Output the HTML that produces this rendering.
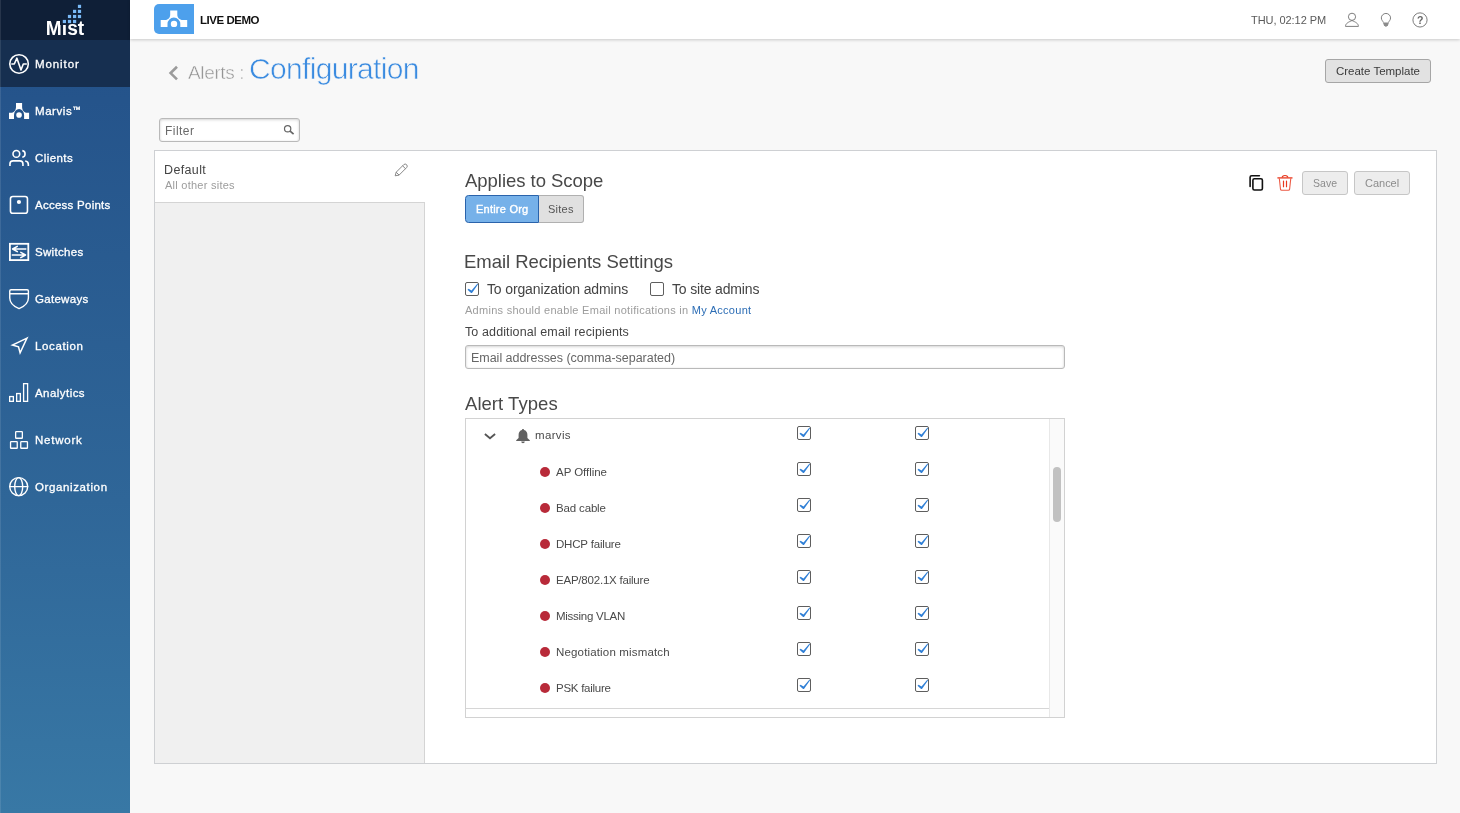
<!DOCTYPE html>
<html lang="en">
<head>
<meta charset="utf-8">
<title>Alerts : Configuration</title>
<style>
*{box-sizing:border-box;margin:0;padding:0}
html,body{width:1460px;height:813px;overflow:hidden;background:#f8f8f8;font-family:"Liberation Sans",sans-serif;color:#4a4a4a}
.abs{position:absolute}
#side{position:absolute;left:0;top:0;width:130px;height:813px;background:linear-gradient(180deg,#22508a 0,#25548b 100px,#2f6698 500px,#3878a5 813px)}
#side .logo{position:absolute;left:0;top:0;width:130px;height:40px;background:#0f1f37}
#side .sel{position:absolute;left:0;top:40px;width:130px;height:47px;background:#162f50}
#top{position:absolute;left:130px;top:0;width:1330px;height:39px;background:#fff;box-shadow:0 1px 3px rgba(0,0,0,.19)}
#brand{position:absolute;left:154px;top:4px;width:40px;height:30px;background:#4da0ec;border-radius:5px 0 0 5px}
.t{position:absolute;white-space:nowrap;will-change:transform}
.btn{position:absolute;border:1px solid #a8a8a8;border-radius:3px;background:#e2e2e2}
.cb{position:absolute;width:14px;height:14px;border:1px solid #5e5e5e;border-radius:2px;background:#fff}
.cb svg{position:absolute;left:-1px;top:-1px;width:14px;height:14px}
.dot{position:absolute;width:10px;height:10px;border-radius:50%;background:#b82a39}
svg{position:absolute;overflow:visible}
#icons{z-index:5;pointer-events:none}
.cb svg{z-index:6}
</style>
</head>
<body>
<div id="side">
  <div class="logo"></div>
  <div class="sel"></div>
  <div class="abs" style="left:0;top:0;width:1px;height:813px;background:rgba(255,255,255,.1)"></div>
</div>
<div id="top"></div>
<div id="brand"></div>

<!-- all icons drawn in page coordinates -->
<svg id="icons" style="left:0;top:0" width="1460" height="813" viewBox="0 0 1460 813">
  <!-- Mist logo squares -->
  <rect x="60" y="18" width="8" height="7" fill="#0f1f37"/>
  <g fill="#79b9f6">
    <rect x="77.9" y="4.8" width="3.2" height="3.2"/>
    <rect x="73" y="9.8" width="3.2" height="3.2"/><rect x="77.9" y="9.8" width="3.2" height="3.2"/>
    <rect x="67.9" y="14.9" width="3.2" height="3.2"/><rect x="73" y="14.9" width="3.2" height="3.2"/><rect x="77.9" y="14.9" width="3.2" height="3.2"/>
    <rect x="62.8" y="19.9" width="3.2" height="3.2"/><rect x="67.9" y="19.9" width="3.2" height="3.2"/><rect x="73" y="19.9" width="3.2" height="3.2"/>
  </g>
  <!-- sidebar icons -->
  <g fill="none" stroke="#fff" stroke-width="1.6" stroke-linejoin="round" stroke-linecap="round">
    <!-- monitor -->
    <circle cx="19.05" cy="63.95" r="9.25"/>
    <path d="M11.3 64H14.3L16.9 58.2 21 70 23.3 64H26.8" stroke-linecap="butt"/>
    <!-- clients -->
    <circle cx="16.35" cy="153.9" r="3.35"/>
    <path d="M22.3 150.6A3.35 3.35 0 0 1 22.3 157.2" stroke-linecap="butt"/>
    <path d="M9.95 165.9V164A3.1 3.1 0 0 1 13.05 160.9H19.85A3.1 3.1 0 0 1 22.95 164V165.9" stroke-linecap="butt"/>
    <path d="M25.2 160.95A3.5 3.5 0 0 1 28.35 164.4V165.9" stroke-linecap="butt"/>
    <!-- access points -->
    <rect x="10.45" y="196.45" width="17" height="16.8" rx="2.3"/>
    <!-- switches -->
    <rect x="9.9" y="243.8" width="18.4" height="16.3" stroke-width="1.8" stroke-linejoin="miter"/>
    <path d="M25.8 249H13M17.3 246.3L12.6 249 17.3 251.7M12.3 255H25M20.8 252.3L25.5 255 20.8 257.7" stroke-width="1.5"/>
    <!-- gateways -->
    <path d="M9.75 291A1.3 1.3 0 0 1 11.05 289.7H27.1A1.3 1.3 0 0 1 28.4 291V298C28.4 303 24 306.6 19.07 308.6 14.1 306.6 9.75 303 9.75 298ZM9.75 293.7H28.4" stroke-width="1.4"/>
    <!-- location -->
    <path d="M27 338.1L12.4 345 18.5 346.9 20.1 352.8Z" stroke-width="1.5" stroke-linejoin="miter"/>
    <!-- analytics -->
    <g stroke-width="1.3" stroke-linejoin="miter">
      <rect x="9.65" y="396.55" width="3.7" height="4.8"/>
      <rect x="16.65" y="393.55" width="3.7" height="7.8"/>
      <rect x="23.6" y="383.65" width="4" height="17.7"/>
    </g>
    <!-- network -->
    <g stroke-width="1.3">
      <rect x="15.65" y="431.55" width="6.7" height="6.7" rx=".6"/>
      <rect x="10.55" y="441.55" width="6.7" height="6.7" rx=".6"/>
      <rect x="20.75" y="441.55" width="6.7" height="6.7" rx=".6"/>
    </g>
    <!-- organization -->
    <g stroke-width="1.4">
      <circle cx="18.7" cy="486.6" r="9"/>
      <ellipse cx="18.7" cy="486.6" rx="4" ry="9"/>
      <path d="M9.7 486.6H27.7"/>
    </g>
  </g>
  <g fill="#fff">
    <!-- marvis -->
    <path d="M16 103H22.1V107C22.1 110 24 112.8 27 112.8H29.1V118.9H24.1V115A5.05 5.9 0 0 0 14 115V118.9H9V112.8H11.1C14.1 112.8 16 110 16 107Z"/>
    <circle cx="19.05" cy="115.05" r="2.8"/>
    <!-- AP dot -->
    <circle cx="18.95" cy="202" r="2.1"/>
    <!-- brand marvis -->
    <path d="M170.2 10.6H177.3V14.4C177.3 17.6 179.6 19.9 182.8 19.9H187.2V27.1H180.3V24A6.4 6.4 0 0 0 167.5 24V27.1H160.7V19.9H165.1C168.2 19.9 170.2 17.6 170.2 14.4Z"/>
    <circle cx="174" cy="23.9" r="3.2"/>
  </g>
  <!-- top right icons -->
  <g fill="none" stroke="#777" stroke-width=".95">
    <circle cx="1352" cy="16.8" r="3.6"/>
    <path d="M1345.5 26.4H1358.4C1358.4 23.2 1355.2 22 1352 20.5 1348.8 22 1345.5 23.2 1345.5 26.4Z" stroke-linejoin="round"/>
    <path d="M1383.3 22.4C1383 21 1381.35 20.3 1381.35 17.9A4.6 4.45 0 0 1 1390.55 17.9C1390.55 20.3 1388.9 21 1388.6 22.4"/>
    <circle cx="1420" cy="19.95" r="7.1"/>
  </g>
  <path d="M1382.9 22.4H1389L1388 25.3 1385.95 27.1 1383.9 25.3Z" fill="#8c8c8c"/>
  <!-- back chevron -->
  <path d="M177 66.8L170.6 73.1 177 79.4" fill="none" stroke="#9b9b9b" stroke-width="2.6"/>
  <!-- search -->
  <circle cx="287.65" cy="128.75" r="3.15" fill="none" stroke="#666" stroke-width="1.2"/>
  <path d="M290.1 131.1L293.6 134.2" stroke="#666" stroke-width="1.7" fill="none"/>
  <!-- pencil -->
  <g fill="none" stroke="#7a7a7a" stroke-width=".9" stroke-linejoin="round">
    <path d="M395.2 175.8L396.2 172.2 403.7 164.7A2.05 2.05 0 0 1 406.6 167.6L399.1 175.1Z"/>
    <path d="M396.2 172.2L399.1 175.1M402.6 165.8L405.5 168.7"/>
  </g>
  <!-- copy -->
  <g fill="none" stroke="#111" stroke-width="1.6">
    <path d="M1250.1 186.4V177.3A1.6 1.6 0 0 1 1251.7 175.7H1259.4" stroke-linecap="round"/>
    <rect x="1252.9" y="178.7" width="9.5" height="11.3" rx="1.5"/>
  </g>
  <!-- trash -->
  <g fill="none" stroke="#e8391f">
    <path d="M1277.4 177.9H1292.5" stroke-width="1.3"/>
    <path d="M1282.2 177.6C1282.2 176.1 1283.3 175.5 1285 175.5 1286.7 175.5 1287.8 176.1 1287.8 177.6" stroke-width="1.2"/>
    <path d="M1279.3 178.2L1280.5 189.2C1280.6 189.9 1281 190.3 1281.7 190.3H1288.4C1289.1 190.3 1289.5 189.9 1289.6 189.2L1290.8 178.2" stroke-width="1.1" stroke="#ec5a45"/>
    <path d="M1283.5 181.2V186.7M1286.5 181.2V186.7" stroke-width="1.2" stroke-linecap="round"/>
  </g>
  <!-- tree chevron + bell -->
  <path d="M484.9 434L490 438.3 495.1 434" fill="none" stroke="#555" stroke-width="1.8"/>
  <path d="M523 429.1C523.6 429.1 524 429.5 524 430.1 526.1 430.6 527.4 432.4 527.4 434.7V438.1L529.8 440.2V440.9H516.2V440.2L518.6 438.1V434.7C518.6 432.4 519.9 430.6 522 430.1 522 429.5 522.4 429.1 523 429.1ZM521.2 441.5H524.8A1.8 1.8 0 0 1 521.2 441.5Z" fill="#616161"/>
</svg>

<!-- boxes -->
<div class="btn" style="left:1325px;top:59px;width:106px;height:24px;border-color:#a6a6a6;background:#e2e2e2"></div>
<div class="abs" id="filter" style="left:159px;top:118px;width:141px;height:24px;border:1px solid #b9b9b9;border-radius:3px;background:#fff;box-shadow:inset 0 1px 3px rgba(0,0,0,.16),inset 0 0 2px rgba(0,0,0,.05)"></div>
<div class="abs" id="panel" style="left:154px;top:150px;width:1283px;height:614px;border:1px solid #ced0d3;background:#fff"></div>
<div class="abs" id="leftgrey" style="left:155px;top:202px;width:270px;height:561px;background:#f0f0f0;border-top:1px solid #d4d4d4;border-right:1px solid #d4d4d4"></div>
<div class="abs" id="bEntire" style="left:465px;top:195px;width:74px;height:28px;border:1px solid #2a63ab;border-radius:3.5px 0 0 3.5px;background:#76b1e9"></div>
<div class="abs" id="bSites" style="left:539px;top:195px;width:45px;height:28px;border:1px solid #b0b0b0;border-left:none;border-radius:0 3px 3px 0;background:#e0e0e0"></div>
<div class="btn" style="left:1302px;top:171px;width:46px;height:24px;border-color:#c6c6c6;background:#ededed"></div>
<div class="btn" style="left:1354px;top:171px;width:56px;height:24px;border-color:#c6c6c6;background:#ededed"></div>
<div class="abs" id="emailin" style="left:465px;top:345px;width:600px;height:24px;border:1px solid #b9b9b9;border-radius:3px;background:#fff;box-shadow:inset 0 1px 3px rgba(0,0,0,.16),inset 0 0 2px rgba(0,0,0,.05)"></div>
<div class="abs" id="box" style="left:465px;top:418px;width:600px;height:300px;border:1px solid #d2d2d2;background:#fff"></div>
<div class="abs" id="track" style="left:1049px;top:419px;width:15px;height:298px;background:#fafafa;border-left:1px solid #e8e8e8"></div>
<div class="abs" id="thumb" style="left:1053px;top:467px;width:8px;height:55px;border-radius:4px;background:#c1c1c1"></div>
<div class="abs" id="sep" style="left:466px;top:708px;width:583px;height:1px;background:#d6d6d6"></div>
<div class="cb" style="left:465px;top:282px"><svg viewBox="0 0 14 14"><path d="M2.5 7.8L3.6 6.7 6.5 8.6 12.3 1.8 13.1 2.3 7 10.9 6.1 10.9Z" fill="#2f7fd6"/></svg></div>
<div class="cb" style="left:650px;top:282px"></div>
<div class="cb" style="left:797px;top:426px"><svg viewBox="0 0 14 14"><path d="M2.5 7.8L3.6 6.7 6.5 8.6 12.3 1.8 13.1 2.3 7 10.9 6.1 10.9Z" fill="#2f7fd6"/></svg></div>
<div class="cb" style="left:915px;top:426px"><svg viewBox="0 0 14 14"><path d="M2.5 7.8L3.6 6.7 6.5 8.6 12.3 1.8 13.1 2.3 7 10.9 6.1 10.9Z" fill="#2f7fd6"/></svg></div>
<div class="cb" style="left:797px;top:462px"><svg viewBox="0 0 14 14"><path d="M2.5 7.8L3.6 6.7 6.5 8.6 12.3 1.8 13.1 2.3 7 10.9 6.1 10.9Z" fill="#2f7fd6"/></svg></div>
<div class="cb" style="left:915px;top:462px"><svg viewBox="0 0 14 14"><path d="M2.5 7.8L3.6 6.7 6.5 8.6 12.3 1.8 13.1 2.3 7 10.9 6.1 10.9Z" fill="#2f7fd6"/></svg></div>
<div class="cb" style="left:797px;top:498px"><svg viewBox="0 0 14 14"><path d="M2.5 7.8L3.6 6.7 6.5 8.6 12.3 1.8 13.1 2.3 7 10.9 6.1 10.9Z" fill="#2f7fd6"/></svg></div>
<div class="cb" style="left:915px;top:498px"><svg viewBox="0 0 14 14"><path d="M2.5 7.8L3.6 6.7 6.5 8.6 12.3 1.8 13.1 2.3 7 10.9 6.1 10.9Z" fill="#2f7fd6"/></svg></div>
<div class="cb" style="left:797px;top:534px"><svg viewBox="0 0 14 14"><path d="M2.5 7.8L3.6 6.7 6.5 8.6 12.3 1.8 13.1 2.3 7 10.9 6.1 10.9Z" fill="#2f7fd6"/></svg></div>
<div class="cb" style="left:915px;top:534px"><svg viewBox="0 0 14 14"><path d="M2.5 7.8L3.6 6.7 6.5 8.6 12.3 1.8 13.1 2.3 7 10.9 6.1 10.9Z" fill="#2f7fd6"/></svg></div>
<div class="cb" style="left:797px;top:570px"><svg viewBox="0 0 14 14"><path d="M2.5 7.8L3.6 6.7 6.5 8.6 12.3 1.8 13.1 2.3 7 10.9 6.1 10.9Z" fill="#2f7fd6"/></svg></div>
<div class="cb" style="left:915px;top:570px"><svg viewBox="0 0 14 14"><path d="M2.5 7.8L3.6 6.7 6.5 8.6 12.3 1.8 13.1 2.3 7 10.9 6.1 10.9Z" fill="#2f7fd6"/></svg></div>
<div class="cb" style="left:797px;top:606px"><svg viewBox="0 0 14 14"><path d="M2.5 7.8L3.6 6.7 6.5 8.6 12.3 1.8 13.1 2.3 7 10.9 6.1 10.9Z" fill="#2f7fd6"/></svg></div>
<div class="cb" style="left:915px;top:606px"><svg viewBox="0 0 14 14"><path d="M2.5 7.8L3.6 6.7 6.5 8.6 12.3 1.8 13.1 2.3 7 10.9 6.1 10.9Z" fill="#2f7fd6"/></svg></div>
<div class="cb" style="left:797px;top:642px"><svg viewBox="0 0 14 14"><path d="M2.5 7.8L3.6 6.7 6.5 8.6 12.3 1.8 13.1 2.3 7 10.9 6.1 10.9Z" fill="#2f7fd6"/></svg></div>
<div class="cb" style="left:915px;top:642px"><svg viewBox="0 0 14 14"><path d="M2.5 7.8L3.6 6.7 6.5 8.6 12.3 1.8 13.1 2.3 7 10.9 6.1 10.9Z" fill="#2f7fd6"/></svg></div>
<div class="cb" style="left:797px;top:678px"><svg viewBox="0 0 14 14"><path d="M2.5 7.8L3.6 6.7 6.5 8.6 12.3 1.8 13.1 2.3 7 10.9 6.1 10.9Z" fill="#2f7fd6"/></svg></div>
<div class="cb" style="left:915px;top:678px"><svg viewBox="0 0 14 14"><path d="M2.5 7.8L3.6 6.7 6.5 8.6 12.3 1.8 13.1 2.3 7 10.9 6.1 10.9Z" fill="#2f7fd6"/></svg></div>
<div class="dot" style="left:540px;top:467px"></div>
<div class="dot" style="left:540px;top:503px"></div>
<div class="dot" style="left:540px;top:539px"></div>
<div class="dot" style="left:540px;top:575px"></div>
<div class="dot" style="left:540px;top:611px"></div>
<div class="dot" style="left:540px;top:647px"></div>
<div class="dot" style="left:540px;top:683px"></div>
<div class="t" id="nav0" style="left:35.00px;top:57.32px;font-size:11.5px;line-height:15px;color:#fff;font-weight:400;letter-spacing:0.906px;-webkit-text-stroke:.3px #fff;">Monitor</div>
<div class="t" id="nav1" style="left:35.00px;top:104.32px;font-size:11.5px;line-height:15px;color:#fff;font-weight:400;letter-spacing:0.559px;-webkit-text-stroke:.3px #fff;">Marvis<span style="font-size:8px;position:relative;top:-3px;letter-spacing:0">™</span></div>
<div class="t" id="nav2" style="left:35.00px;top:151.32px;font-size:11.5px;line-height:15px;color:#fff;font-weight:400;letter-spacing:0.431px;-webkit-text-stroke:.3px #fff;">Clients</div>
<div class="t" id="nav3" style="left:35.00px;top:198.32px;font-size:11.5px;line-height:15px;color:#fff;font-weight:400;letter-spacing:0.256px;-webkit-text-stroke:.3px #fff;">Access Points</div>
<div class="t" id="nav4" style="left:35.00px;top:245.32px;font-size:11.5px;line-height:15px;color:#fff;font-weight:400;letter-spacing:0.323px;-webkit-text-stroke:.3px #fff;">Switches</div>
<div class="t" id="nav5" style="left:35.00px;top:292.32px;font-size:11.5px;line-height:15px;color:#fff;font-weight:400;letter-spacing:0.292px;-webkit-text-stroke:.3px #fff;">Gateways</div>
<div class="t" id="nav6" style="left:35.00px;top:339.32px;font-size:11.5px;line-height:15px;color:#fff;font-weight:400;letter-spacing:0.641px;-webkit-text-stroke:.3px #fff;">Location</div>
<div class="t" id="nav7" style="left:35.00px;top:386.32px;font-size:11.5px;line-height:15px;color:#fff;font-weight:400;letter-spacing:0.449px;-webkit-text-stroke:.3px #fff;">Analytics</div>
<div class="t" id="nav8" style="left:35.00px;top:433.32px;font-size:11.5px;line-height:15px;color:#fff;font-weight:400;letter-spacing:0.758px;-webkit-text-stroke:.3px #fff;">Network</div>
<div class="t" id="nav9" style="left:35.00px;top:480.32px;font-size:11.5px;line-height:15px;color:#fff;font-weight:400;letter-spacing:0.620px;-webkit-text-stroke:.3px #fff;">Organization</div>
<div class="t" id="livedemo" style="left:200.00px;top:12.52px;font-size:11.5px;line-height:15px;color:#111;font-weight:700;letter-spacing:-0.467px;">LIVE DEMO</div>
<div class="t" id="clock" style="left:1251.00px;top:12.99px;font-size:11px;line-height:14px;color:#5a5a5a;font-weight:400;letter-spacing:-0.053px;">THU, 02:12 PM</div>
<div class="t" id="ttl1" style="left:188.00px;top:60.02px;font-size:19px;line-height:25px;color:#949494;font-weight:400;letter-spacing:-0.360px;-webkit-text-stroke:.45px #f8f8f8;">Alerts :</div>
<div class="t" id="ttl2" style="left:249.00px;top:49.20px;font-size:30px;line-height:39px;color:#3a8be0;font-weight:400;letter-spacing:-0.674px;-webkit-text-stroke:.6px #f8f8f8;">Configuration</div>
<div class="t" id="createtx" style="left:1336.00px;top:63.52px;font-size:11.5px;line-height:15px;color:#3a3a3a;font-weight:400;letter-spacing:-0.015px;">Create Template</div>
<div class="t" id="filtertx" style="left:165.00px;top:122.74px;font-size:12px;line-height:16px;color:#6a6a6a;font-weight:400;letter-spacing:0.444px;">Filter</div>
<div class="t" id="deflt" style="left:164.00px;top:161.57px;font-size:12.5px;line-height:16px;color:#444;font-weight:400;letter-spacing:0.360px;">Default</div>
<div class="t" id="allother" style="left:165.00px;top:178.19px;font-size:11px;line-height:14px;color:#9c9c9c;font-weight:400;letter-spacing:0.253px;">All other sites</div>
<div class="t" id="h1" style="left:465.00px;top:168.59px;font-size:18.5px;line-height:24px;color:#484848;font-weight:400;letter-spacing:-0.031px;">Applies to Scope</div>
<div class="t" id="entiretx" style="left:476.00px;top:201.79px;font-size:11px;line-height:14px;color:#fff;font-weight:400;letter-spacing:0.230px;-webkit-text-stroke:.4px #fff;">Entire Org</div>
<div class="t" id="sitestx" style="left:548.00px;top:202.39px;font-size:11px;line-height:14px;color:#555;font-weight:400;letter-spacing:0.235px;">Sites</div>
<div class="t" id="savetx" style="left:1313.00px;top:176.36px;font-size:10.5px;line-height:14px;color:#8c8c8c;font-weight:400;letter-spacing:0.026px;">Save</div>
<div class="t" id="canceltx" style="left:1365.00px;top:176.19px;font-size:11px;line-height:14px;color:#8c8c8c;font-weight:400;letter-spacing:-0.014px;">Cancel</div>
<div class="t" id="h2" style="left:464.00px;top:249.69px;font-size:18.5px;line-height:24px;color:#484848;font-weight:400;letter-spacing:-0.031px;">Email Recipients Settings</div>
<div class="t" id="lab1" style="left:487.00px;top:280.45px;font-size:14px;line-height:18px;color:#444;font-weight:400;letter-spacing:-0.133px;">To organization admins</div>
<div class="t" id="lab2" style="left:672.00px;top:280.45px;font-size:14px;line-height:18px;color:#444;font-weight:400;letter-spacing:-0.162px;">To site admins</div>
<div class="t" id="hint" style="left:465.00px;top:303.29px;font-size:11px;line-height:14px;color:#9c9c9c;font-weight:400;letter-spacing:0.276px;">Admins should enable Email notifications in <span style="color:#2c6db5">My Account</span></div>
<div class="t" id="lab3" style="left:465.00px;top:323.67px;font-size:12.5px;line-height:16px;color:#444;font-weight:400;letter-spacing:0.116px;">To additional email recipients</div>
<div class="t" id="emailph" style="left:471.00px;top:349.97px;font-size:12.5px;line-height:16px;color:#666;font-weight:400;letter-spacing:-0.026px;">Email addresses (comma-separated)</div>
<div class="t" id="h3" style="left:465.00px;top:391.59px;font-size:18.5px;line-height:24px;color:#484848;font-weight:400;letter-spacing:0.043px;">Alert Types</div>
<div class="t" id="marvis" style="left:535.00px;top:427.52px;font-size:11.5px;line-height:15px;color:#4a4a4a;font-weight:400;letter-spacing:0.347px;">marvis</div>
<div class="t" id="row0" style="left:556.00px;top:464.52px;font-size:11.5px;line-height:15px;color:#4a4a4a;font-weight:400;letter-spacing:-0.039px;">AP Offline</div>
<div class="t" id="row1" style="left:556.00px;top:500.52px;font-size:11.5px;line-height:15px;color:#4a4a4a;font-weight:400;letter-spacing:-0.154px;">Bad cable</div>
<div class="t" id="row2" style="left:556.00px;top:536.52px;font-size:11.5px;line-height:15px;color:#4a4a4a;font-weight:400;letter-spacing:-0.180px;">DHCP failure</div>
<div class="t" id="row3" style="left:556.00px;top:572.52px;font-size:11.5px;line-height:15px;color:#4a4a4a;font-weight:400;letter-spacing:-0.213px;">EAP/802.1X failure</div>
<div class="t" id="row4" style="left:556.00px;top:608.52px;font-size:11.5px;line-height:15px;color:#4a4a4a;font-weight:400;letter-spacing:-0.272px;">Missing VLAN</div>
<div class="t" id="row5" style="left:556.00px;top:644.52px;font-size:11.5px;line-height:15px;color:#4a4a4a;font-weight:400;letter-spacing:0.160px;">Negotiation mismatch</div>
<div class="t" id="row6" style="left:556.00px;top:680.52px;font-size:11.5px;line-height:15px;color:#4a4a4a;font-weight:400;letter-spacing:-0.256px;">PSK failure</div>
<div class="t" style="left:1416.6px;top:13.5px;font-size:10.5px;line-height:13px;font-weight:700;color:#666">?</div>
<svg style="left:40px;top:0;will-change:transform" width="60" height="40" viewBox="40 0 60 40"><text id="mist" x="45.8" y="34.8" font-family="Liberation Sans, sans-serif" font-size="19.6" font-weight="700" fill="#fff" textLength="38.4" lengthAdjust="spacingAndGlyphs">Mist</text></svg>
</body>
</html>
